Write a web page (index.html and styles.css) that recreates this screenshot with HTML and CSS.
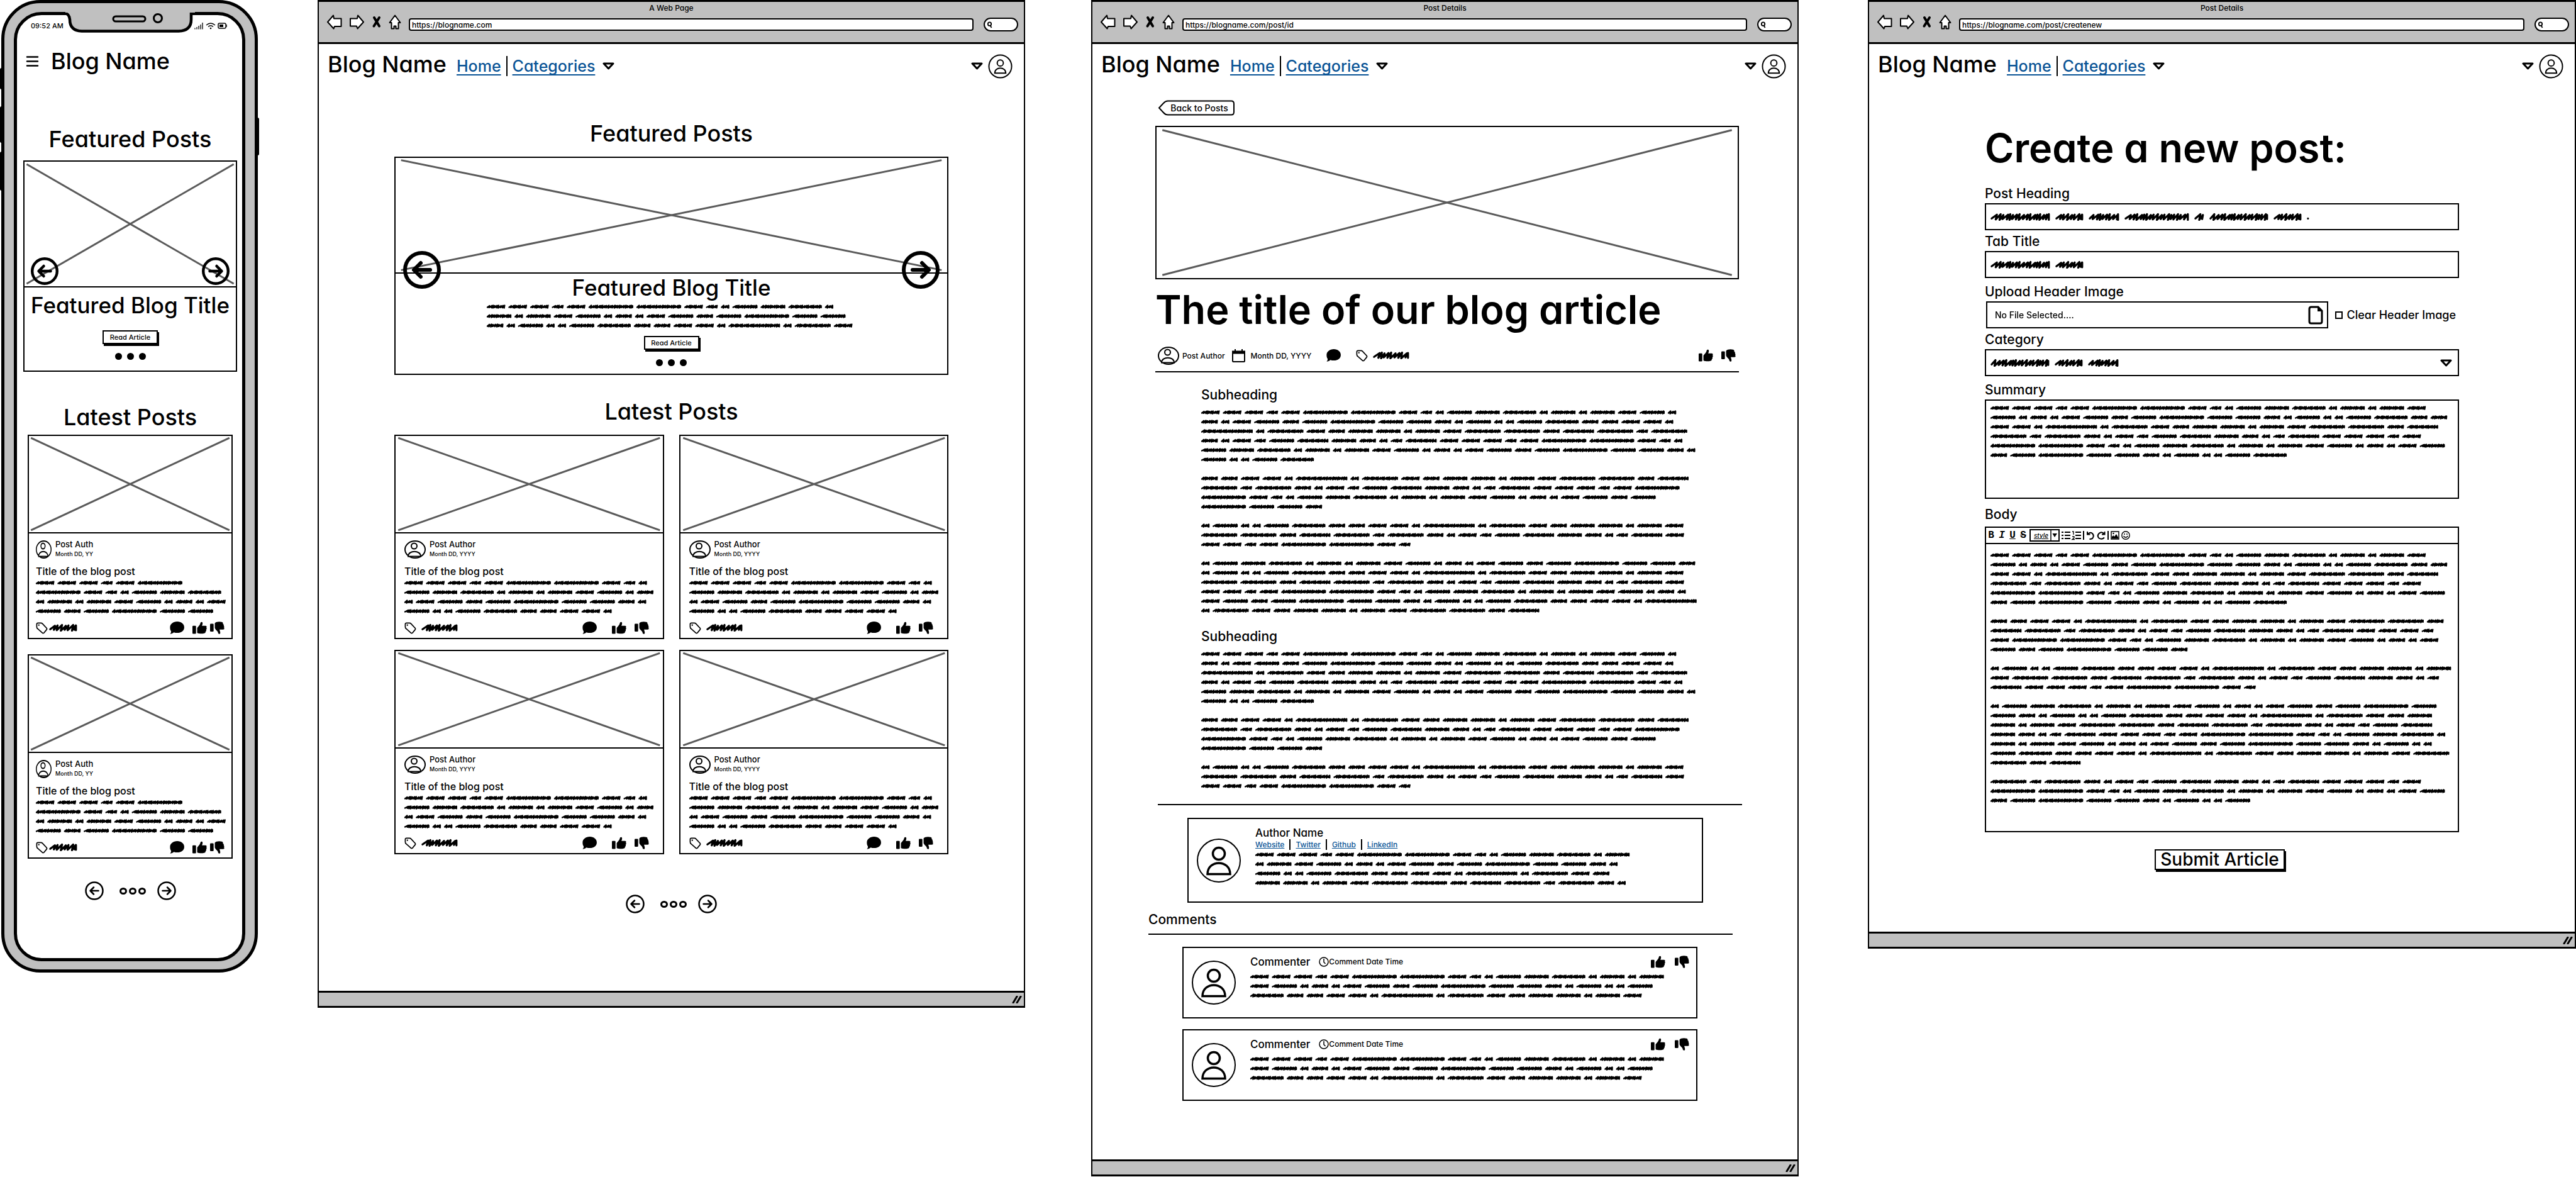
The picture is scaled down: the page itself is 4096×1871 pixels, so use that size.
FILE: index.html
```html
<!DOCTYPE html>
<html lang="en">
<head>
<meta charset="utf-8">
<title>Blog wireframes</title>
<link rel="stylesheet" href="styles.css">
</head>
<body>
<svg class="sprite" aria-hidden="true">
  <symbol id="cross" viewBox="0 0 100 100" preserveAspectRatio="none"><path d="M1 2L99 98M99 2L1 98" vector-effect="non-scaling-stroke" fill="none" stroke="#5a5a5a" stroke-width="3"/></symbol>
  <symbol id="avatar" viewBox="0 0 40 40"><g fill="#fff" stroke="#000" stroke-width="2"><circle cx="20" cy="20" r="18.5"/><circle cx="20" cy="14.5" r="5"/><path d="M11 31C11 20 29 20 29 31Z"/></g></symbol>
  <symbol id="avatar-small" viewBox="0 0 34 29" preserveAspectRatio="none"><g fill="#fff" stroke="#000" stroke-width="2"><ellipse cx="17" cy="14.5" rx="16" ry="13.5"/><circle cx="15.5" cy="9" r="4.5"/><path d="M6 25.500C6 15 26 15 26 25.500Z"/></g></symbol>
  <symbol id="avatar-large" viewBox="0 0 70 70"><g fill="#fff" stroke="#000" stroke-width="3.500"><circle cx="35" cy="35" r="34" stroke-width="2"/><circle cx="35" cy="24" r="9.500"/><path d="M17 56.500C17 33 53 33 53 56.500Z"/></g></symbol>
  <symbol id="arrow-left" viewBox="0 0 60 60"><g fill="none" stroke="#000" stroke-linecap="round" stroke-linejoin="round"><circle cx="30" cy="30" r="27"/><path d="M43 30H18M28 19L17 30L28 41"/></g></symbol>
  <symbol id="arrow-right" viewBox="0 0 60 60"><g fill="none" stroke="#000" stroke-linecap="round" stroke-linejoin="round"><circle cx="30" cy="30" r="27"/><path d="M17 30H42M32 19L43 30L32 41"/></g></symbol>
  <symbol id="tag" viewBox="0 0 20 20"><path d="M1.500 3.500Q1.500 1.500 3.500 1.500H8.500Q10 1.500 11 2.500L18 10Q19 11.500 18 12.500L13.500 18Q12 19 11 18L3 11Q1.500 10 1.500 8Z" fill="#fff" stroke="#000" stroke-width="1.800"/><circle cx="5" cy="5" r="1.200"/></symbol>
  <symbol id="comment" viewBox="0 0 72 63"><path d="M37 0C57 0 72 13 72 29C72 46 57 57 37 57C31 57 25 56 20 54C15 58 8 61 1 62C5 58 7 54 6 48C2 43 1 36 1 29C1 13 17 0 37 0Z"/></symbol>
  <symbol id="up" viewBox="0 0 73 62"><rect y="21" width="18" height="40" rx="4"/><path d="M24 56V32C27 26 38 18 40 8C40 0 50-1 51 6C52 12 49 17 48 21H66C72 21 73 28 70 30C74 33 72 39 69 40C71 44 69 49 66 50C67 55 64 59 59 59C48 62 32 61 24 56Z"/></symbol>
  <symbol id="down" viewBox="0 0 73 62"><rect y="10" width="18" height="40" rx="4"/><path d="M24 8C30 0 48-1 59 2C64 3 66 7 65 11C69 13 70 17 69 21C72 24 72 29 70 31C74 35 72 40 66 40H48C49 47 54 56 50 61C44 63 40 60 40 54C38 46 27 42 24 32Z"/></symbol>
  <symbol id="caret" viewBox="0 0 19 12"><path d="M2 2H17L9.500 10Z" fill="#fff" stroke="#000" stroke-width="3" stroke-linejoin="round"/></symbol>
  <symbol id="nav-back" viewBox="0 0 25 24"><path d="M2 12L11 1.500L12 6.500H23.500V19H13L11.500 22.500Z" fill="#fff" stroke="#000" stroke-width="2" stroke-linejoin="round"/></symbol>
  <symbol id="nav-forward" viewBox="0 0 25 24"><path d="M23 12L14 1.500L13 6.500H2V18.500H12L13.500 22.500Z" fill="#fff" stroke="#000" stroke-width="2" stroke-linejoin="round"/></symbol>
  <symbol id="nav-stop" viewBox="0 0 16 24"><path d="M4 5L12 18.500M12 5L3.500 18.500" stroke="#000" stroke-width="4" stroke-linecap="round"/></symbol>
  <symbol id="nav-home" viewBox="0 0 20 24"><path d="M10 1.500L18.500 13H15.500V22.500H11.500V18.500H8.500V22.500H4.500V13H1.500Z" fill="#fff" stroke="#000" stroke-width="2" stroke-linejoin="round"/></symbol>
  <symbol id="search" viewBox="0 0 10 12"><circle cx="5" cy="4.500" r="3" fill="none" stroke="#000" stroke-width="2"/><path d="M6 7L8.500 11" stroke="#000" stroke-width="2"/></symbol>
  <symbol id="grip" viewBox="0 0 16 12"><path d="M2 11L8 1M8 11L14 1" stroke="#000" stroke-width="3" stroke-linecap="round"/></symbol>
</svg>

<div class="board">
  <section class="phone" aria-label="Home, mobile">
    <span class="key key-l1"></span><span class="key key-l2"></span><span class="key key-l3"></span><span class="key key-r"></span>
    <div class="screen">
      <svg class="notch" viewBox="0 0 206 34" aria-hidden="true"><path d="M0 2.500Q6 3 7 12Q7 30 26 30.500H180Q200 30 200 12V2.500H206V0H0Z" fill="#c0c0c0"/><path d="M0 2.500Q6 3 7 12Q7 30 26 30.500H180Q200 30 200 12V2.500H206" fill="none" stroke="#000" stroke-width="4.500"/><path d="M0-6H206V1H0Z" fill="#c0c0c0"/><rect x="76" y="7" width="51" height="8" rx="4" fill="none" stroke="#000" stroke-width="3"/><circle cx="147" cy="10" r="6.500" fill="none" stroke="#000" stroke-width="3"/></svg>
      <div class="status"><span>09:52 AM</span>
        <svg width="52" height="14" viewBox="0 0 52 14" aria-hidden="true"><path d="M1 12.500V10.500M4 12.500V9M7 12.500V7M10 12.500V5M13 12.500V2" stroke="#000" stroke-width="1.300"/><path d="M19 6Q26 0 33 6M22 8.500Q26 5 30 8.500" fill="none" stroke="#000" stroke-width="1.300"/><circle cx="26" cy="11" r="1.300"/><rect x="38" y="3" width="12" height="8" rx="2" fill="none" stroke="#000" stroke-width="1.500"/><rect x="40" y="5" width="6" height="4"/><path d="M51.300 5V9" stroke="#000"/></svg>
      </div>
      <header class="phone-head">
        <button class="plain" aria-label="Menu"><svg width="19" height="17" viewBox="0 0 19 17"><path d="M1 1.500H18M1 8.500H18M1 15.500H18" stroke="#000" stroke-width="2.500" stroke-linecap="round"/></svg></button>
        <span class="brand">Blog Name</span>
      </header>
      <main class="phone-main">
        <h2>Featured Posts</h2>
        <article class="feature">
          <svg class="pic"><use href="#cross"/></svg>
          <button class="plain prev" aria-label="Previous"><svg><use href="#arrow-left"/></svg></button>
          <button class="plain next" aria-label="Next"><svg><use href="#arrow-right"/></svg></button>
          <h3>Featured Blog Title</h3>
          <button class="push">Read Article</button>
          <div class="dots"><i></i><i></i><i></i></div>
        </article>
        <h2 class="latest">Latest Posts</h2>
        <div class="cards">
          <article class="card">
            <svg class="pic"><use href="#cross"/></svg>
            <div class="card-body">
              <div class="by"><svg class="face"><use href="#avatar-small"/></svg><div><p class="name">Post Auth</p><p class="date">Month DD, YY</p></div></div>
              <h4>Title of the blog post</h4>
              <div class="scribble" data-lines="6 7 10 6"></div>
              <div class="icons"><svg class="tag"><use href="#tag"/></svg><span class="scrawl" data-words="45"></span><svg class="talk"><use href="#comment"/></svg><svg class="vote"><use href="#up"/></svg><svg class="vote"><use href="#down"/></svg></div>
            </div>
          </article>
          <article class="card">
            <svg class="pic"><use href="#cross"/></svg>
            <div class="card-body">
              <div class="by"><svg class="face"><use href="#avatar-small"/></svg><div><p class="name">Post Auth</p><p class="date">Month DD, YY</p></div></div>
              <h4>Title of the blog post</h4>
              <div class="scribble" data-lines="6 7 10 6"></div>
              <div class="icons"><svg class="tag"><use href="#tag"/></svg><span class="scrawl" data-words="45"></span><svg class="talk"><use href="#comment"/></svg><svg class="vote"><use href="#up"/></svg><svg class="vote"><use href="#down"/></svg></div>
            </div>
          </article>
        </div>
        <nav class="pages"><button class="plain" aria-label="Newer"><svg><use href="#arrow-left"/></svg></button><div class="rings"><i></i><i></i><i></i></div><button class="plain" aria-label="Older"><svg><use href="#arrow-right"/></svg></button></nav>
      </main>
    </div>
  </section>

  <section class="browser home" aria-label="Home">
    <div class="chrome">
      <p>A Web Page</p>
      <div class="bar">
        <div class="keys"><svg width="25"><use href="#nav-back"/></svg><svg width="25"><use href="#nav-forward"/></svg><svg width="16"><use href="#nav-stop"/></svg><svg width="20"><use href="#nav-home"/></svg></div>
        <input class="url" aria-label="Address" value="https://blogname.com">
        <label class="find"><svg><use href="#search"/></svg><input type="search" aria-label="Search"></label>
      </div>
    </div>
    <header class="site">
      <span class="brand">Blog Name</span>
      <nav><a href="#">Home</a><i class="rule"></i><a href="#">Categories</a><svg class="caret"><use href="#caret"/></svg></nav>
      <button class="plain account" aria-label="Account"><svg class="caret"><use href="#caret"/></svg><svg class="me"><use href="#avatar"/></svg></button>
    </header>
    <main class="home-main">
      <h2>Featured Posts</h2>
      <article class="feature">
        <svg class="pic"><use href="#cross"/></svg>
        <button class="plain prev" aria-label="Previous"><svg><use href="#arrow-left"/></svg></button>
        <button class="plain next" aria-label="Next"><svg><use href="#arrow-right"/></svg></button>
        <h3>Featured Blog Title</h3>
        <div class="scribble" data-lines="14 15 16"></div>
        <button class="push">Read Article</button>
        <div class="dots"><i></i><i></i><i></i></div>
      </article>
      <h2 class="latest">Latest Posts</h2>
      <div class="cards">
        <article class="card">
          <svg class="pic"><use href="#cross"/></svg>
          <div class="card-body">
            <div class="by"><svg class="face"><use href="#avatar-small"/></svg><div><p class="name">Post Author</p><p class="date">Month DD, YYYY</p></div></div>
            <h4>Title of the blog post</h4>
            <div class="scribble" data-lines="10 11 10 10"></div>
            <div class="icons"><svg class="tag"><use href="#tag"/></svg><span class="scrawl" data-words="58"></span><svg class="talk"><use href="#comment"/></svg><svg class="vote"><use href="#up"/></svg><svg class="vote"><use href="#down"/></svg></div>
          </div>
        </article>
        <article class="card">
          <svg class="pic"><use href="#cross"/></svg>
          <div class="card-body">
            <div class="by"><svg class="face"><use href="#avatar-small"/></svg><div><p class="name">Post Author</p><p class="date">Month DD, YYYY</p></div></div>
            <h4>Title of the blog post</h4>
            <div class="scribble" data-lines="10 11 10 10"></div>
            <div class="icons"><svg class="tag"><use href="#tag"/></svg><span class="scrawl" data-words="58"></span><svg class="talk"><use href="#comment"/></svg><svg class="vote"><use href="#up"/></svg><svg class="vote"><use href="#down"/></svg></div>
          </div>
        </article>
        <article class="card">
          <svg class="pic"><use href="#cross"/></svg>
          <div class="card-body">
            <div class="by"><svg class="face"><use href="#avatar-small"/></svg><div><p class="name">Post Author</p><p class="date">Month DD, YYYY</p></div></div>
            <h4>Title of the blog post</h4>
            <div class="scribble" data-lines="10 11 10 10"></div>
            <div class="icons"><svg class="tag"><use href="#tag"/></svg><span class="scrawl" data-words="58"></span><svg class="talk"><use href="#comment"/></svg><svg class="vote"><use href="#up"/></svg><svg class="vote"><use href="#down"/></svg></div>
          </div>
        </article>
        <article class="card">
          <svg class="pic"><use href="#cross"/></svg>
          <div class="card-body">
            <div class="by"><svg class="face"><use href="#avatar-small"/></svg><div><p class="name">Post Author</p><p class="date">Month DD, YYYY</p></div></div>
            <h4>Title of the blog post</h4>
            <div class="scribble" data-lines="10 11 10 10"></div>
            <div class="icons"><svg class="tag"><use href="#tag"/></svg><span class="scrawl" data-words="58"></span><svg class="talk"><use href="#comment"/></svg><svg class="vote"><use href="#up"/></svg><svg class="vote"><use href="#down"/></svg></div>
          </div>
        </article>
      </div>
      <nav class="pages"><button class="plain" aria-label="Newer"><svg><use href="#arrow-left"/></svg></button><div class="rings"><i></i><i></i><i></i></div><button class="plain" aria-label="Older"><svg><use href="#arrow-right"/></svg></button></nav>
    </main>
    <footer class="foot"><svg><use href="#grip"/></svg></footer>
  </section>

  <section class="browser" aria-label="Post details">
    <div class="chrome">
      <p>Post Details</p>
      <div class="bar">
        <div class="keys"><svg width="25"><use href="#nav-back"/></svg><svg width="25"><use href="#nav-forward"/></svg><svg width="16"><use href="#nav-stop"/></svg><svg width="20"><use href="#nav-home"/></svg></div>
        <input class="url" aria-label="Address" value="https://blogname.com/post/id">
        <label class="find"><svg><use href="#search"/></svg><input type="search" aria-label="Search"></label>
      </div>
    </div>
    <header class="site">
      <span class="brand">Blog Name</span>
      <nav><a href="#">Home</a><i class="rule"></i><a href="#">Categories</a><svg class="caret"><use href="#caret"/></svg></nav>
      <button class="plain account" aria-label="Account"><svg class="caret"><use href="#caret"/></svg><svg class="me"><use href="#avatar"/></svg></button>
    </header>
    <main class="post-main">
      <button class="back"><svg viewBox="0 0 122 25" preserveAspectRatio="none"><path d="M16 1.500H117Q121 1.500 121 6V19Q121 23.500 117 23.500H16Q12 23.500 9 20L2 12.500L9 5Q12 1.500 16 1.500Z" fill="#fff" stroke="#000" stroke-width="2"/></svg><span>Back to Posts</span></button>
      <svg class="pic hero"><use href="#cross"/></svg>
      <h1>The title of our blog article</h1>
      <div class="meta">
        <svg class="face"><use href="#avatar-small"/></svg><span>Post Author</span>
        <svg class="cal" viewBox="0 0 21 21"><path d="M1 3.500H20V19Q20 20 19 20H2Q1 20 1 19Z" fill="#fff" stroke="#000" stroke-width="2"/><path d="M1 3H20V7.500H1ZM4 0H6V4H4ZM15 0H17V4H15Z"/></svg><span>Month DD, YYYY</span>
        <svg class="talk"><use href="#comment"/></svg><svg class="tag"><use href="#tag"/></svg><span class="scrawl" data-words="58"></span>
        <svg class="vote first"><use href="#up"/></svg><svg class="vote"><use href="#down"/></svg>
      </div>
      <hr>
      <div class="article">
        <h3>Subheading</h3>
        <div class="scribble" data-lines="20 21 17 21 21 5 0 19 20 20 4 0 21 19 8 0 21 21 19 21 20 13"></div>
        <h3>Subheading</h3>
        <div class="scribble" data-lines="20 21 17 21 21 5 0 19 20 20 4 0 21 19 8"></div>
      </div>
      <section class="writer">
        <hr>
        <div class="panel">
          <svg class="big"><use href="#avatar-large"/></svg>
          <div>
            <p class="who">Author Name</p>
            <p class="links"><a href="#">Website</a><i></i><a href="#">Twitter</a><i></i><a href="#">Github</a><i></i><a href="#">LinkedIn</a></p>
            <div class="scribble" data-lines="15 16 15 14"></div>
          </div>
        </div>
      </section>
      <section class="comments">
        <h3>Comments</h3>
        <hr>
        <article class="panel">
          <svg class="big"><use href="#avatar-large"/></svg>
          <div>
            <p class="who">Commenter <svg class="clock" viewBox="0 0 16 16"><circle cx="8" cy="8" r="7" fill="#fff" stroke="#000" stroke-width="1.500"/><path d="M8 3V8.500L10.500 11" fill="none" stroke="#000" stroke-width="1.500"/></svg><span>Comment Date Time</span><svg class="vote first"><use href="#up"/></svg><svg class="vote"><use href="#down"/></svg></p>
            <div class="scribble" data-lines="17 18 16"></div>
          </div>
        </article>
        <article class="panel">
          <svg class="big"><use href="#avatar-large"/></svg>
          <div>
            <p class="who">Commenter <svg class="clock" viewBox="0 0 16 16"><circle cx="8" cy="8" r="7" fill="#fff" stroke="#000" stroke-width="1.500"/><path d="M8 3V8.500L10.500 11" fill="none" stroke="#000" stroke-width="1.500"/></svg><span>Comment Date Time</span><svg class="vote first"><use href="#up"/></svg><svg class="vote"><use href="#down"/></svg></p>
            <div class="scribble" data-lines="17 18 16"></div>
          </div>
        </article>
      </section>
    </main>
    <footer class="foot"><svg><use href="#grip"/></svg></footer>
  </section>

  <section class="browser" aria-label="Create post">
    <div class="chrome">
      <p>Post Details</p>
      <div class="bar">
        <div class="keys"><svg width="25"><use href="#nav-back"/></svg><svg width="25"><use href="#nav-forward"/></svg><svg width="16"><use href="#nav-stop"/></svg><svg width="20"><use href="#nav-home"/></svg></div>
        <input class="url" aria-label="Address" value="https://blogname.com/post/createnew">
        <label class="find"><svg><use href="#search"/></svg><input type="search" aria-label="Search"></label>
      </div>
    </div>
    <header class="site">
      <span class="brand">Blog Name</span>
      <nav><a href="#">Home</a><i class="rule"></i><a href="#">Categories</a><svg class="caret"><use href="#caret"/></svg></nav>
      <button class="plain account" aria-label="Account"><svg class="caret"><use href="#caret"/></svg><svg class="me"><use href="#avatar"/></svg></button>
    </header>
    <main class="form-main">
      <h1>Create a new post:</h1>
      <form>
        <label for="heading">Post Heading</label>
        <div class="field"><input id="heading"><span class="scrawl" data-words="95 45 49 103 16 94 45 5"></span></div>
        <label for="tab">Tab Title</label>
        <div class="field"><input id="tab"><span class="scrawl" data-words="95 45"></span></div>
        <label class="spaced" for="file">Upload Header Image</label>
        <div class="upload">
          <div class="field file"><input id="file" type="file"><span>No File Selected....</span><svg viewBox="0 0 24 30"><path d="M5 2H16L22 8V25Q22 28 19 28H5Q2 28 2 25V5Q2 2 5 2Z" fill="#fff" stroke="#000" stroke-width="3"/><path d="M15 1V9H23Z"/></svg></div>
          <label class="clear"><input type="checkbox">Clear Header Image</label>
        </div>
        <label for="category">Category</label>
        <div class="field"><select id="category"><option></option></select><span class="scrawl" data-words="94 45 49"></span><svg class="caret"><use href="#caret"/></svg></div>
        <label class="spaced" for="summary">Summary</label>
        <div class="field tall"><textarea id="summary"></textarea><div class="scribble" data-lines="18 20 17 19 19 12"></div></div>
        <label class="body-label" for="body">Body</label>
        <div class="editor">
          <div class="tools">
            <button type="button" class="glyph"><b>B</b></button>
            <button type="button" class="glyph"><em>I</em></button>
            <button type="button" class="glyph"><u>U</u></button>
            <button type="button" class="glyph"><s>S</s></button>
            <button type="button" class="style"><span>style</span><svg width="13" height="16" viewBox="0 0 13 16"><path d="M1 0V16" stroke="#000" stroke-width="1.500"/><path d="M3.500 5H11L7 11Z"/></svg></button>
            <button type="button" class="plain" aria-label="Bullets"><svg viewBox="0 0 14 14"><path d="M5 2H14M5 7H14M5 12H14M0 2H3M0 7H3M0 12H3" stroke="#000" stroke-width="2"/></svg></button>
            <button type="button" class="plain" aria-label="Numbering"><svg viewBox="0 0 14 14"><path d="M5 2H14M5 7H14M5 12H14" stroke="#000" stroke-width="2"/><path d="M0 1H2V6M0 9H3V11L0 13.500H4" fill="none" stroke="#000" stroke-width="1.300"/></svg></button>
            <i></i>
            <button type="button" class="plain" aria-label="Undo"><svg viewBox="0 0 14 14"><path d="M2 1V5.500H6.500M2.500 5.500Q6 1 10 4Q13.500 8 10 12Q8 13 5.500 13" fill="none" stroke="#000" stroke-width="2"/></svg></button>
            <button type="button" class="plain" aria-label="Redo"><svg viewBox="0 0 14 14"><path d="M12.500 1V5.500H8M12 5Q8 0 3.500 4Q0 8 3.500 11.500Q8 14.500 12 10.500" fill="none" stroke="#000" stroke-width="2"/></svg></button>
            <i></i>
            <button type="button" class="plain" aria-label="Image"><svg viewBox="0 0 14 14"><rect x="1" y="1" width="12" height="12" fill="#fff" stroke="#000" stroke-width="1.500"/><path d="M2 12V9L4.500 7L6 9L9 5L12 10V12Z"/><circle cx="4.500" cy="4" r="1.200"/></svg></button>
            <button type="button" class="plain" aria-label="Emoji"><svg viewBox="0 0 14 14"><circle cx="7" cy="7" r="6.200" fill="#fff" stroke="#000" stroke-width="1.400"/><path d="M3.500 8Q7 12.500 10.500 8" fill="none" stroke="#000" stroke-width="1.300"/><circle cx="5" cy="5" r="1"/><circle cx="9" cy="5" r="1"/></svg></button>
          </div>
          <div class="field pad"><textarea id="body"></textarea><div class="scribble" data-lines="18 20 17 19 19 12 0 18 19 19 7 0 20 18 10 0 19 19 17 19 20 18 3 0 19 19 11"></div></div>
        </div>
        <button type="submit" class="push submit">Submit Article</button>
      </form>
    </main>
    <footer class="foot"><svg><use href="#grip"/></svg></footer>
  </section>
</div>
<script src="scribble.js"></script>
</body>
</html>
```
FILE: styles.css
```css
* { box-sizing: border-box; }
body {
  margin: 0;
  background: #fff;
  color: #000;
  font: 500 13px/15px Inter, "Open Sans", sans-serif;
  font-feature-settings: "cv11";
}
h1, h2, h3, h4, p { margin: 0; font-weight: 500; }
button, input, select, textarea { font: inherit; font-feature-settings: inherit; color: inherit; margin: 0; }
svg { display: block; flex: none; overflow: visible; }
a { color: #0a5496; text-decoration: underline; text-decoration-skip-ink: none; }
hr { margin: 0; border: 0; border-top: 2px solid #000; }
.sprite { position: absolute; width: 0; height: 0; }
.plain { padding: 0; border: 0; background: none; display: block; }

.board {
  display: grid;
  grid-template-columns:
    minmax(0, 413fr) 92fr minmax(0, 1125fr) 105fr minmax(0, 1125fr) 110fr minmax(0, 1126fr);
  align-items: start;
}
.board > :nth-child(1) { grid-column: 1; }
.board > :nth-child(2) { grid-column: 3; }
.board > :nth-child(3) { grid-column: 5; }
.board > :nth-child(4) { grid-column: 7; }

h2, .brand { font-size: 36px; line-height: 44px; white-space: nowrap; }
h2 { text-align: center; }

/* Phone */
.phone {
  position: relative;
  margin: 0 3px 0 2px;
  padding: 14px 15px 13px;
  border: 5px solid #000;
  border-radius: 62px;
  background: #c0c0c0;
}
.screen { position: relative; border: 5px solid #000; border-radius: 44px; background: #fff; }
.notch { position: absolute; left: 77px; top: -5px; width: 206px; height: 34px; }
.key { position: absolute; width: 5px; background: #000; border-radius: 3px; }
.key-l1 { left: -7px; top: 103px; height: 34px; }
.key-l2 { left: -7px; top: 164px; height: 58px; }
.key-l3 { left: -7px; top: 236px; height: 62px; }
.key-r { right: -7px; top: 182px; height: 60px; }
.status { display: flex; align-items: center; justify-content: space-between; height: 34px; padding: 0 24px 0 22px; font-size: 11px; }
.phone-head { display: flex; align-items: center; gap: 20px; height: 78px; padding-left: 15px; }
.phone-main { padding: 63px 8px 92px 10px; }
.phone-main h2 { margin-bottom: 12px; }
.phone-main .latest { margin: 50px 0 6px; }

/* Featured post */
.feature { position: relative; border: 2px solid #000; text-align: center; }
.pic { width: 100%; height: 153px; }
.feature .pic { height: 198px; border-bottom: 2px solid #000; box-sizing: content-box; }
.feature h3 { font-size: 35px; line-height: 44px; white-space: nowrap; }
.phone .feature h3 { margin: 6px 0 18px; }
.prev, .next { position: absolute; top: 152px; }
.prev { left: 10px; }
.next { right: 10px; }
.prev svg, .next svg { width: 44px; height: 44px; }
.prev use, .next use { stroke-width: 6; }
.push { height: 22px; padding: 0 8px; border: 2px solid #000; background: #fff; box-shadow: 2px 3px 0 #000; font-size: 11px; line-height: 16px; }
.feature .push { display: block; width: 88px; margin: 0 auto; }
.dots { display: flex; justify-content: center; gap: 8px; padding: 14px 0 17px; }
.dots i { width: 11px; height: 11px; border-radius: 50%; background: #000; }

/* Post cards */
.cards { display: grid; gap: 24px; margin: 0 7px; grid-template-columns: minmax(0, 1fr); }
.card { border: 2px solid #000; }
.card .pic { border-bottom: 2px solid #000; box-sizing: content-box; }
.card-body { padding: 10px 11px 6px; }
.by { display: flex; align-items: center; gap: 6px; height: 30px; }
.face { width: 34px; height: 29px; }
.phone .face { width: 25px; }
.date { font-size: 9px; }
.card h4 { margin-top: 9px; font-size: 16px; line-height: 22px; }
.icons { display: flex; align-items: center; gap: 2px; height: 20px; margin-top: 9px; }
.tag { width: 19px; height: 19px; }
.talk, .vote { width: 23px; height: 20px; }
.icons .talk { margin-left: auto; margin-right: 11px; }
.icons .vote + .vote { margin-left: 3px; }
.pages { display: flex; align-items: center; justify-content: center; gap: 18px; margin-top: 36px; }
.pages svg { width: 30px; height: 30px; }
.pages use { stroke-width: 5; }
.rings { display: flex; gap: 3px; padding-left: 7px; }
.rings i { width: 12px; height: 11px; border: 3px solid #000; border-radius: 50%; }

/* Browser window */
.browser { border: 2px solid #000; border-top-width: 3px; border-bottom-width: 3px; }
.chrome { height: 67px; border-bottom: 3px solid #000; background: #c0c0c0; }
.chrome p { font-size: 12px; line-height: 20px; text-align: center; }
.bar { display: flex; align-items: center; height: 32px; padding: 0 9px 0 12px; }
.keys { display: flex; gap: 11px; padding-bottom: 8px; }
.keys svg { height: 24px; }
.url { flex: 1; min-width: 0; height: 20px; margin: 0 16px 0 12px; padding: 0 3px; border: 2px solid #000; border-radius: 4px; background: #fff; font-size: 12px; }
.find { display: flex; align-items: center; width: 55px; height: 22px; padding-left: 3px; border: 2px solid #000; border-radius: 12px; background: #fff; }
.find svg { width: 9px; height: 11px; }
.find input { width: 30px; border: 0; padding: 0; background: none; }
.site { display: flex; align-items: center; height: 70px; padding: 0 18px 0 14px; }
.site .brand { padding-bottom: 6px; }
.site nav { display: flex; align-items: center; margin-left: 16px; font-size: 25px; line-height: 32px; }
.site nav a { text-decoration-thickness: 2px; text-underline-offset: 4px; }
.rule { width: 2px; height: 32px; margin: 0 8px; background: #000; }
.caret { width: 19px; height: 12px; }
.site nav .caret { margin-left: 12px; }
.account { display: flex; align-items: center; gap: 8px; margin-left: auto; }
.me { width: 39px; height: 39px; }
.foot { display: flex; justify-content: flex-end; align-items: center; height: 24px; padding-right: 3px; border-top: 3px solid #000; background: #c0c0c0; }
.foot svg { width: 16px; height: 12px; }

/* Home page */
.home-main { padding: 50px 120px 123px; }
.home-main h2 { margin-bottom: 15px; }
.home-main .latest { margin-top: 36px; }
.home .feature .pic { height: 182px; }
.home .feature h3 { line-height: 45px; }
.home .feature .scribble { width: 588px; margin: 0 auto 9px; }
.home .prev, .home .next { top: 148px; }
.home .prev { left: 12px; }
.home .next { right: 12px; }
.home .prev svg, .home .next svg { width: 60px; height: 60px; }
.home .dots { padding: 15px 0 12px; }
.home .cards { grid-template-columns: repeat(2, minmax(0, 1fr)); gap: 17px 24px; margin: 0; }
.home .card-body { padding-left: 14px; padding-right: 22px; }
.home .icons { gap: 8px; }
.home .icons .talk { margin-right: 16px; }
.home .icons .vote + .vote { margin-left: 5px; }
.home .pages { margin-top: 64px; }

/* Post page */
.post-main { padding: 19px 93px 93px 100px; }
.back { display: grid; width: 122px; height: 25px; margin-left: 4px; padding: 0; border: 0; background: none; font-size: 14px; line-height: 25px; }
.back > * { grid-area: 1 / 1; }
.back svg { width: 122px; height: 25px; }
.back span { padding-left: 10px; position: relative; }
.hero { height: 244px; margin-top: 16px; border: 2px solid #000; }
.post-main h1, .form-main h1 { font-size: 63px; line-height: 80px; font-weight: 600; white-space: nowrap; }
.post-main h1 { margin: 8px 0 18px; }
.meta { display: flex; align-items: center; height: 30px; margin-bottom: 10px; padding: 0 5px 0 4px; font-size: 12px; }
.meta > span { margin-left: 5px; }
.cal { width: 21px; height: 21px; margin: 0 4px 0 11px; }
.meta .talk { margin: 0 24px; }
.meta .scrawl { margin-left: 8px; }
.meta .first { margin: 0 13px 0 auto; }
.article { padding: 0 0 1px 73px; }
.post-main h3 { font-size: 21px; line-height: 28px; }
.article h3 { margin: 22px 0 6px; }
.article .scribble + h3 { margin-top: 20px; }
.writer { margin: 20px -5px 0 4px; }
.panel { display: flex; align-items: center; min-height: 114px; margin: 17px 56px 0 54px; padding: 0 11px 0 13px; border: 2px solid #000; }
.panel > div { flex: 1; min-width: 0; align-self: flex-start; padding: 12px 0 14px 23px; }
.writer .panel { min-height: 135px; margin: 20px 62px 0 47px; }
.big { width: 70px; height: 70px; }
.who { display: flex; align-items: center; font-size: 17px; line-height: 20px; }
.who span { font-size: 12px; }
.who .first { margin: 0 15px 0 auto; }
.clock { width: 16px; height: 16px; margin-left: 14px; }
.links { display: flex; align-items: center; gap: 8px; line-height: 17px; font-size: 12px; }
.links i { width: 2px; height: 17px; background: #000; }
.comments { margin: 13px 10px 0 -11px; }
.comments hr { margin: 8px 0 19px; }
.comments .who { margin-bottom: 6px; }

/* Create-post form */
.form-main { padding: 55px 184px 98px; }
form > label { display: block; margin: 6px 0 3px; font-size: 21px; line-height: 24px; }
form > label:first-child { margin-top: 21px; }
form > .spaced { margin-top: 10px; }
form > .body-label { margin: 13px 0 7px; }
.field { display: grid; grid-template-columns: minmax(0, 1fr); align-items: center; height: 43px; border: 2px solid #000; }
.field > * { grid-area: 1 / 1; }
.field > :not(input):not(select):not(textarea) { pointer-events: none; z-index: 1; }
.field input, .field select, .field textarea { width: 100%; height: 100%; padding: 0; border: 0; outline: 0; background: none; appearance: none; resize: none; }
.field .scrawl, .field .scribble { margin-left: 7px; }
.field .caret { justify-self: end; margin-right: 9px; }
.upload { display: flex; align-items: center; gap: 11px; margin-left: 2px; }
.file { flex: 1; }
.file input { opacity: 0; }
.file span { margin-left: 12px; font-size: 14px; }
.file svg { width: 24px; height: 30px; justify-self: end; margin-right: 6px; }
.clear { display: flex; align-items: center; gap: 6px; margin-right: 5px; font-size: 18px; line-height: 24px; }
.clear input { appearance: none; width: 12px; height: 12px; border: 2px solid #000; }
.tall { height: 158px; align-items: start; padding-top: 4px; }
.editor { border: 2px solid #000; }
.tools { display: flex; align-items: center; gap: 3px; height: 26px; padding-left: 1px; border-bottom: 2px solid #000; }
.tools .plain svg { width: 14px; height: 14px; }
.tools i { width: 2px; height: 14px; background: #000; }
.glyph { width: 14px; padding: 0; border: 0; background: none; font: 700 16px/18px "Liberation Mono", monospace; }
.style { display: flex; align-items: center; height: 20px; padding: 0 0 0 2px; border: 2px solid #000; background: #fff; font-size: 10px; font-style: italic; }
.style span { width: 29px; text-decoration: underline; }
.pad { height: 456px; align-items: start; padding-top: 10px; border: 0; }
.push.submit { display: block; width: 207px; height: 33px; margin: 27px auto 0 270px; padding: 0; font-size: 28px; line-height: 29px; }
```
FILE: scribble.js
```js
// Relative word lengths of the filler text; it repeats when a block runs past the end.
const WORDS = [49,49,49,31,49,118,118,49,31,22,66,65,88,22,65,22,65,49,66,22,44,22,49,66,44,66,118,66,66,44,22,66,22,22,66,88,44,44,49,49,22,136,22,95,49,44,65,65,22,65,49,95,95,44,82,95,31,95,44,22,49,31,66,82,65,44,22,31,82];
const UNIT = 0.603;
const GAP = 5;
const LINE = 15;
const STEPS = [3.4, 2.6, 3.8, 2.4, 2.4, 3.2, 2.6, 3.6];

function stroke(x, y, w, h, k, seed) {
  const r = h / 2;
  const end = x + w - k * 1.2;
  let cx = x + k;
  let i = seed % STEPS.length;
  let d = `M${cx.toFixed(1)} ${(y + r * 0.5).toFixed(1)}h.1`;
  while (cx < end - k) {
    const step = STEPS[i++ % STEPS.length] * k;
    const lift = r * (0.7 + 0.3 * ((i * 7 + seed) % 3) / 2);
    const nx = Math.min(cx + step * 1.3, end);
    d += `L${nx.toFixed(1)} ${(y - lift).toFixed(1)}L${Math.min(cx + step, end).toFixed(1)} ${(y + lift).toFixed(1)}`;
    cx += step;
  }
  return d;
}

function svg(width, height, d, thick) {
  return `<svg width="${Math.ceil(width)}" height="${height}" aria-hidden="true"><path d="${d}" fill="none" stroke="#000" stroke-width="${thick}" stroke-linecap="round" stroke-linejoin="round"/></svg>`;
}

document.querySelectorAll('.scribble').forEach(el => {
  const lines = el.dataset.lines.split(' ').map(Number);
  let n = 0, d = '', max = 0;
  lines.forEach((count, row) => {
    let x = 0;
    for (let i = 0; i < count; i++, n++) {
      const w = WORDS[n % WORDS.length] * UNIT;
      d += stroke(x, row * LINE + LINE / 2, w, 4, 1, WORDS[n % WORDS.length]);
      x += w + GAP;
    }
    max = Math.max(max, x - GAP);
  });
  el.innerHTML = svg(max, lines.length * LINE, d, 2.4);
});

document.querySelectorAll('.scrawl').forEach(el => {
  let x = 0, d = '';
  el.dataset.words.split(' ').map(Number).forEach(w => {
    d += stroke(x, 8, w, 9, 1.8, w);
    x += w + 8;
  });
  el.innerHTML = svg(x - 8, 16, d, 3.2);
});
```
